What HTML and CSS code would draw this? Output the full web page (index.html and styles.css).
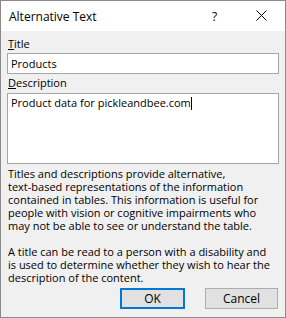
FILE: index.html
```html
<!DOCTYPE html>
<html lang="en">
<head>
    <meta charset="UTF-8">
    <title>Alternative Text</title>
    <link rel="stylesheet" href="styles.css">
</head>
<body>
    <div class="dialog">
        <div class="titlebar">
            <span class="titlebar-text">Alternative Text</span>
            <span class="help-btn">?</span>
            <span class="close-btn">
                <svg width="11" height="11" viewBox="0 0 11 11">
                    <path d="M0.5 0.5 L10.5 10.5 M10.5 0.5 L0.5 10.5" stroke="#000" stroke-width="1" fill="none"/>
                </svg>
            </span>
        </div>

        <div class="content">
            <div class="field-label"><u>T</u>itle</div>
            <div class="text-input">Products</div>

            <div class="field-label desc-label"><u>D</u>escription</div>
            <div class="text-area">Product data for pickleandbee.com<span class="caret"></span></div>

            <p class="help-text">Titles and descriptions provide alternative,<br>text-based representations of the information<br>contained in tables. This information is useful for<br>people with vision or cognitive impairments who<br>may not be able to see or understand the table.</p>
            <p class="help-text">A title can be read to a person with a disability and<br>is used to determine whether they wish to hear the<br>description of the content.</p>

            <div class="buttons">
                <button class="btn btn-default">OK</button>
                <button class="btn btn-cancel">Cancel</button>
            </div>
        </div>
    </div>
</body>
</html>
```

FILE: styles.css
```css
html, body {
    margin: 0;
    padding: 0;
}

body {
    font-family: "Open Sans", "Noto Sans", sans-serif;
    font-size: 11px;
    color: #000;
    background: #f0f0f0;
}

.dialog {
    width: 286px;
    height: 318px;
    box-sizing: border-box;
    border: 1px solid #8a8a8a;
    background: #f0f0f0;
    display: flex;
    flex-direction: column;
}

/* Title bar */
.titlebar {
    height: 30px;
    background: #fff;
    display: flex;
    align-items: center;
    flex-shrink: 0;
}

.titlebar-text {
    font-size: 12px;
    margin-left: 8px;
    flex: 1;
}

.help-btn {
    font-size: 12px;
    width: 14px;
    margin-right: 30px;
}

.close-btn {
    width: 11px;
    height: 11px;
    margin-right: 18px;
    margin-top: -1px;
}

.close-btn svg {
    display: block;
}

/* Body */
.content {
    padding: 6px 6px 0 6px;
    display: flex;
    flex-direction: column;
}

.field-label {
    height: 14px;
    line-height: 14px;
    margin-left: 1px;
    margin-bottom: 2px;
}

.desc-label {
    margin-top: 2px;
    margin-bottom: 3px;
}

.text-input {
    height: 21px;
    box-sizing: border-box;
    border: 1px solid #a6a6a6;
    background: #fff;
    padding: 0 3px;
    line-height: 19px;
}

.text-area {
    height: 71px;
    box-sizing: border-box;
    border: 1px solid #a6a6a6;
    background: #fff;
    padding: 1px 3px;
    line-height: 15px;
}

.caret {
    display: inline-block;
    width: 1px;
    height: 13px;
    background: #000;
    vertical-align: -3px;
}

.help-text {
    margin: 3px 0 0 1px;
    line-height: 13px;
}

.help-text + .help-text {
    margin-top: 13px;
}

/* Buttons */
.buttons {
    display: flex;
    justify-content: flex-end;
    gap: 20px;
    margin-top: 4px;
}

.btn {
    font-family: inherit;
    font-size: 12px;
    height: 21px;
    padding: 0;
    background: #e1e1e1;
    color: #000;
    border: 1px solid #adadad;
}

.btn-default {
    width: 65px;
    border: 2px solid #0078d7;
}

.btn-cancel {
    width: 73px;
    margin-right: 1px;
}
```
